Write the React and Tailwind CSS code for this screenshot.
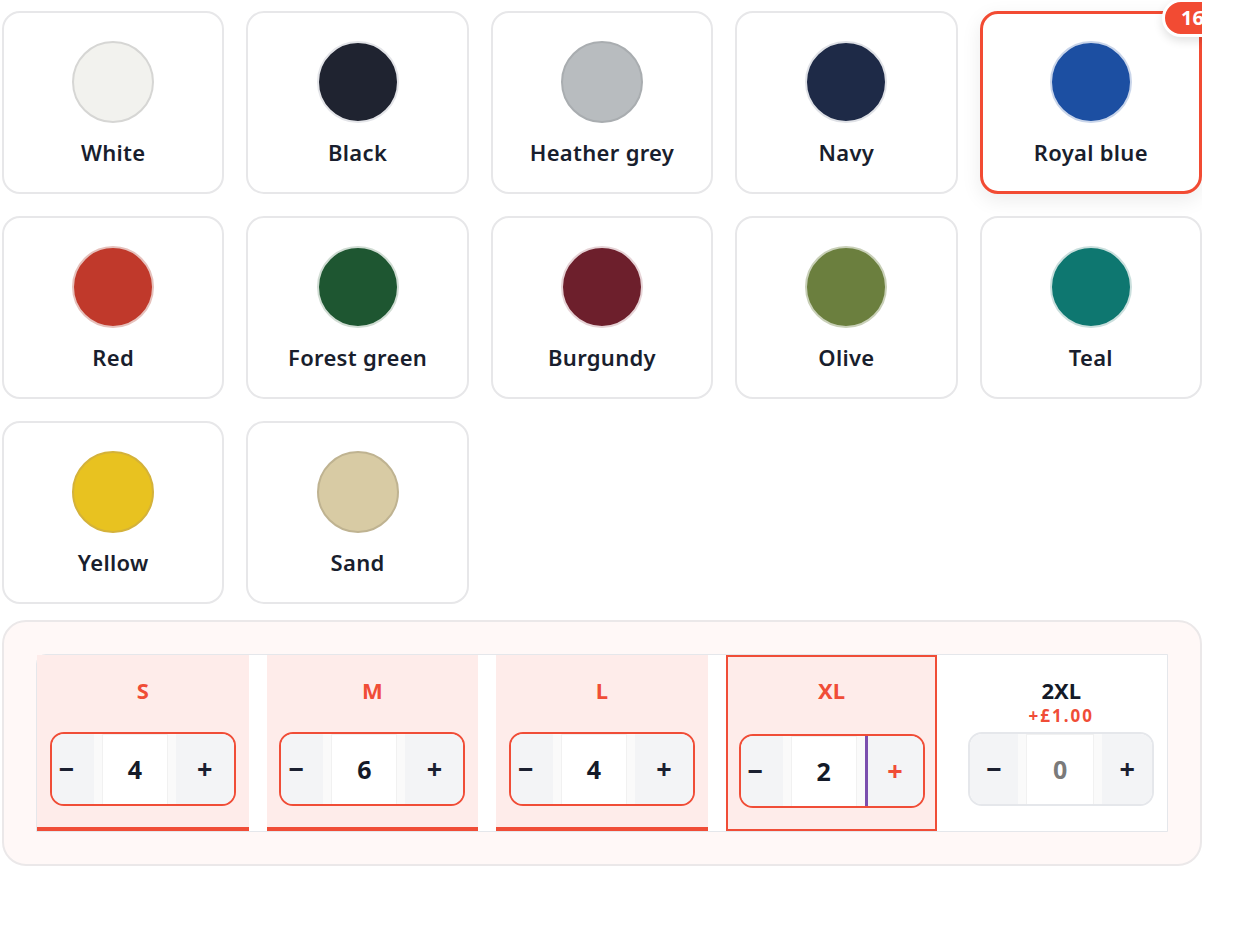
import { useState } from 'react';

const COLOURS = [
  { name: 'White', hex: '#f2f2ee', ring: '#d6d6d4' },
  { name: 'Black', hex: '#1f2330', ring: '#e3e4e8' },
  { name: 'Heather grey', hex: '#b8bcbf', ring: '#a9adb0' },
  { name: 'Navy', hex: '#1e2a47', ring: '#dfe1e6' },
  { name: 'Royal blue', hex: '#1c4fa2', ring: '#c9d5ea' },
  { name: 'Red', hex: '#c0392b', ring: '#e6c1bc' },
  { name: 'Forest green', hex: '#1e5631', ring: '#d0dcd3' },
  { name: 'Burgundy', hex: '#6d1f2c', ring: '#e6d3d6' },
  { name: 'Olive', hex: '#6b7f3e', ring: '#c9d0b8' },
  { name: 'Teal', hex: '#0e7770', ring: '#cadfdd' },
  { name: 'Yellow', hex: '#e8c220', ring: '#d4b23a' },
  { name: 'Sand', hex: '#d8cba4', ring: '#bfb391' },
];

const SIZES = [
  { label: 'S', qty: 4 },
  { label: 'M', qty: 6 },
  { label: 'L', qty: 4 },
  { label: 'XL', qty: 2, focused: true },
  { label: '2XL', qty: 0, extra: '+£1.00' },
];

function Swatch({ colour, selected, count, onClick }) {
  return (
    <button
      onClick={onClick}
      className={`relative flex h-[183px] flex-col items-center rounded-[18px] bg-white ${
        selected
          ? 'border-[3px] border-[#f24b33] pt-[27px] shadow-[0_6px_20px_rgba(0,0,0,0.08)]'
          : 'border-2 border-[#e7e7e9] pt-[28px]'
      }`}
    >
      <span
        className="block h-[82px] w-[82px] rounded-full border-2"
        style={{ backgroundColor: colour.hex, borderColor: colour.ring }}
      />
      <span className="mt-[14px] text-[22px] font-semibold leading-[30px] tracking-[0.3px] text-[#191e2d]">
        {colour.name}
      </span>
      {selected && count > 0 && (
        <span className="absolute -right-[24px] -top-[15px] flex h-[38px] min-w-[60px] items-center justify-center rounded-full border-[3px] border-white bg-[#f24b33] px-[16px] text-[20px] font-bold text-white shadow-[0_4px_10px_rgba(0,0,0,0.12)]">
          {count}
        </span>
      )}
    </button>
  );
}

function Stepper({ qty, active, focused }) {
  const border = active ? 'border-[#f04d37]' : 'border-[#e5e7eb]';
  return (
    <div className={`flex h-[74px] w-[186px] overflow-hidden rounded-[14px] border-2 ${border}`}>
      <button
        className={`flex items-center bg-[#f3f4f6] text-[27px] font-bold text-[#1b2030] ${
          active ? 'w-[42px] pl-[7px]' : 'w-[48px] justify-center'
        }`}
      >
        −
      </button>
      <div className="flex flex-1 bg-[#fafafa] px-[8px]">
        <div className="flex flex-1 items-center justify-center border-x border-t border-[#f1f1f1] bg-white text-[25px] font-bold">
          <span className={qty > 0 ? 'text-[#141a28]' : 'text-[#7a7a7a]'}>{qty}</span>
        </div>
      </div>
      <button
        className={`flex items-center justify-center bg-[#f3f4f6] text-[27px] font-bold ${
          active ? 'w-[58px]' : 'w-[50px]'
        } ${focused ? 'border-l-[3px] border-[#7b4fae] text-[#f04d37]' : 'text-[#1b2030]'}`}
      >
        +
      </button>
    </div>
  );
}

export default function App() {
  const [selected, setSelected] = useState('Royal blue');
  const total = SIZES.reduce((s, x) => s + x.qty, 0);

  return (
    <div
      className="w-[1202px] overflow-hidden bg-white pl-[2px] pt-[11px]"
      style={{ fontFamily: '"Noto Sans", "Open Sans", sans-serif' }}
    >
      <div className="grid grid-cols-5 gap-x-[22px] gap-y-[22px]">
        {COLOURS.map((c) => (
          <Swatch
            key={c.name}
            colour={c}
            selected={selected === c.name}
            count={total}
            onClick={() => setSelected(c.name)}
          />
        ))}
      </div>

      <div className="mt-[16px] rounded-[24px] border-2 border-[#ebe8e9] bg-[#fff8f7] p-[32px]">
        <div className="flex gap-[18px] rounded-tl-[10px] border border-[#e5e7eb] bg-white">
          {SIZES.map((s) => {
            const active = s.qty > 0;
            let cls = 'bg-white';
            if (s.focused) cls = 'border-2 border-[#f04d37] bg-[#feecea]';
            else if (active) cls = 'border-b-4 border-[#f04d37] bg-[#feecea]';
            return (
              <div key={s.label} className={`flex h-[176px] w-[212px] flex-col items-center ${cls}`}>
                <div className={`flex h-[77px] flex-col items-center ${s.focused ? 'pt-[19px]' : 'pt-[21px]'}`}>
                  <span
                    className={`text-[22px] font-bold leading-[28px] ${
                      active ? 'text-[#f04d37]' : 'text-[#141a28]'
                    }`}
                  >
                    {s.label}
                  </span>
                  {s.extra && (
                    <span className="mt-[1px] text-[17px] font-bold leading-[22px] tracking-[2px] text-[#f04d37]">
                      {s.extra}
                    </span>
                  )}
                </div>
                <Stepper qty={s.qty} active={active} focused={s.focused} />
              </div>
            );
          })}
        </div>
      </div>
    </div>
  );
}
